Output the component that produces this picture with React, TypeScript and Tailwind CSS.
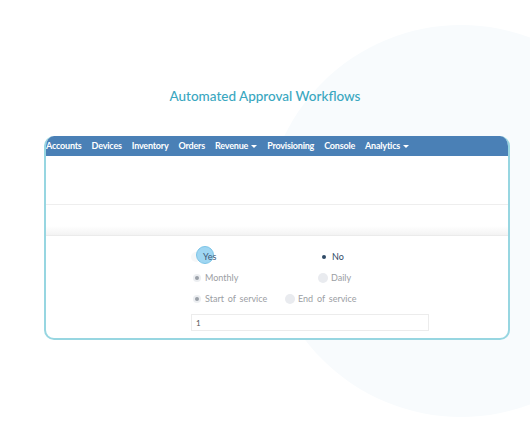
const navItems = [
  { label: "Accounts" },
  { label: "Devices" },
  { label: "Inventory" },
  { label: "Orders" },
  { label: "Revenue", caret: true },
  { label: "Provisioning" },
  { label: "Console" },
  { label: "Analytics", caret: true },
];

function Caret() {
  return (
    <svg width="6" height="3" viewBox="0 0 6 3" className="ml-[3px] mt-[1px]">
      <path d="M0 0 L6 0 L3 3 Z" fill="#ffffff" />
    </svg>
  );
}

// radio variants seen in the form
function Radio({ kind }: { kind: "on" | "dark" | "off" | "faint" }) {
  if (kind === "on")
    return (
      <span className="flex h-[8px] w-[8px] items-center justify-center rounded-full bg-[#eceef1]">
        <span className="h-[4px] w-[4px] rounded-full bg-[#9aa0a8]" />
      </span>
    );
  if (kind === "dark")
    return (
      <span className="flex h-[8px] w-[8px] items-center justify-center rounded-full bg-white">
        <span className="h-[4px] w-[4px] rounded-full bg-[#2f4a66]" />
      </span>
    );
  if (kind === "off")
    return <span className="h-[10px] w-[10px] rounded-full bg-[#e9ebef]" />;
  return <span className="h-[10px] w-[10px] rounded-full bg-[#f6f7f8]" />;
}

export default function App() {
  return (
    <div className="relative h-[442px] w-[530px] overflow-hidden bg-white font-['Lato',sans-serif]">
      {/* soft background circle */}
      <div className="absolute left-[265px] top-[25px] h-[392px] w-[392px] rounded-full bg-[#f8fbfd]" />

      <div className="relative flex flex-col items-center pt-[86px]">
        <h1 className="text-[13.5px] font-medium leading-[20px] text-[#3aa7bf]">
          Automated Approval Workflows
        </h1>
      </div>

      <div className="relative ml-[44px] mt-[30px] flex h-[204px] w-[466px] flex-col overflow-hidden rounded-[10px] border-2 border-t-0 border-[#97d6e1] bg-white">
        {/* nav */}
        <div className="flex h-[20px] items-center gap-[10px] bg-[#4a80b6] text-[9px] font-bold tracking-[-0.2px] text-white">
          {navItems.map((item) => (
            <span key={item.label} className="flex items-center">
              {item.label}
              {item.caret && <Caret />}
            </span>
          ))}
        </div>

        <div className="h-[49px] border-b border-[#eeeeee]" />
        <div className="h-[30px] bg-gradient-to-b from-white from-70% to-[#f3f3f3]" />
        <div className="h-px bg-[#ebebeb]" />

        {/* form */}
        <div className="flex flex-col pl-[145px] pt-[10px] text-[9px] text-[#9b9ea3] [word-spacing:1.5px]">
          <div className="flex h-[21px] items-center">
            <div className="flex w-[129px] items-center">
              <div className="relative flex items-center">
                <Radio kind="faint" />
                <span className="absolute left-[5px] top-[-4px] h-[18px] w-[18px] rounded-full border border-[#7cc4e6] bg-[#9fd6f2]" />
                <span className="relative ml-[2px] text-[#3d5a78]">Yes</span>
              </div>
            </div>
            <div className="flex items-center gap-[4px] text-[#2f4a66]">
              <Radio kind="dark" />
              <span>No</span>
            </div>
          </div>

          <div className="flex h-[21px] items-center">
            <div className="flex w-[127px] items-center gap-[4px] pl-[2px]">
              <Radio kind="on" />
              <span>Monthly</span>
            </div>
            <div className="flex items-center gap-[3px]">
              <Radio kind="off" />
              <span>Daily</span>
            </div>
          </div>

          <div className="flex h-[21px] items-center">
            <div className="flex w-[94px] items-center gap-[4px] pl-[2px]">
              <Radio kind="on" />
              <span>Start of service</span>
            </div>
            <div className="flex items-center gap-[3px]">
              <Radio kind="off" />
              <span>End of service</span>
            </div>
          </div>

          <div className="mt-[5px] flex h-[17px] w-[238px] items-center border border-[#ececec] pl-[4px] text-[8px] text-[#555]">
            1
          </div>
        </div>
      </div>
    </div>
  );
}
